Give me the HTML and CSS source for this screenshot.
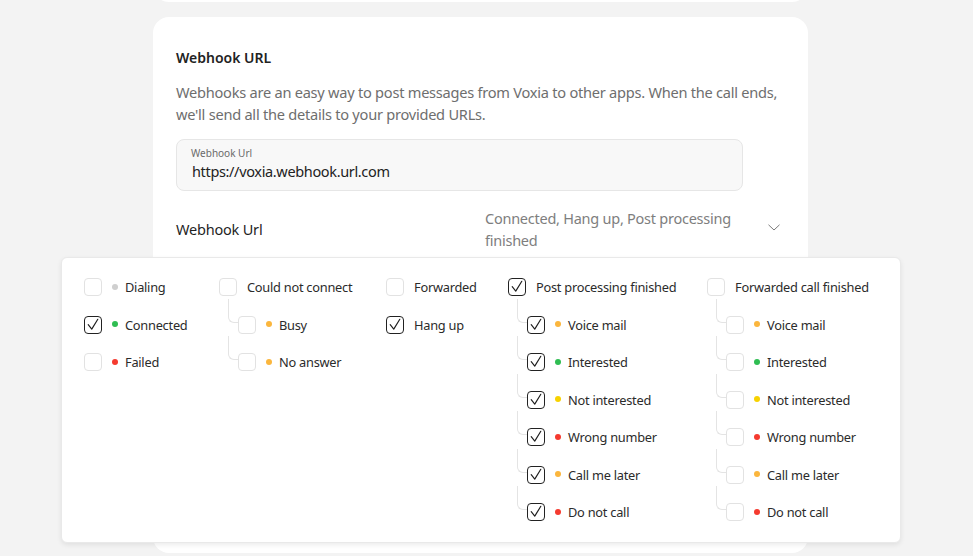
FILE: index.html
```html
<!DOCTYPE html>
<html>
<head>
<meta charset="utf-8">
<link rel="stylesheet" href="styles.css">
</head>
<body>
<div class="page">
  <div class="card card-top"></div>
  <div class="card card-main">
    <h2 class="title">Webhook URL</h2>
    <p class="desc">Webhooks are an easy way to post messages from Voxia to other apps. When the call ends,<br>we'll send all the details to your provided URLs.</p>
    <div class="input">
      <span class="input-label">Webhook Url</span>
      <span class="input-value">https://voxia.webhook.url.com</span>
    </div>
    <div class="select-row">
      <span class="select-label">Webhook Url</span>
      <span class="select-value">Connected, Hang up, Post processing finished</span>
      <svg class="chevron" width="12" height="7" viewBox="0 0 12 7"><path d="M0.5 0.8 L6 6 L11.5 0.8" fill="none" stroke="#7a7a7a" stroke-width="1"/></svg>
    </div>

    <div class="popover">
      <div class="col">
        <div class="item"><span class="cb"></span><span class="dot gray"></span><span class="lbl">Dialing</span></div>
        <div class="item"><span class="cb on"><svg viewBox="0 0 18 18"><path d="M3.6 8.6 L7.6 13.6 L14.4 2.6"/></svg></span><span class="dot green"></span><span class="lbl">Connected</span></div>
        <div class="item"><span class="cb"></span><span class="dot red"></span><span class="lbl">Failed</span></div>
      </div>
      <div class="col">
        <div class="item"><span class="cb"></span><span class="lbl plain">Could not connect</span></div>
        <div class="item child"><span class="cb"></span><span class="dot orange"></span><span class="lbl">Busy</span></div>
        <div class="item child"><span class="cb"></span><span class="dot orange"></span><span class="lbl">No answer</span></div>
      </div>
      <div class="col">
        <div class="item"><span class="cb"></span><span class="lbl plain">Forwarded</span></div>
        <div class="item"><span class="cb on"><svg viewBox="0 0 18 18"><path d="M3.6 8.6 L7.6 13.6 L14.4 2.6"/></svg></span><span class="lbl plain">Hang up</span></div>
      </div>
      <div class="col">
        <div class="item"><span class="cb on"><svg viewBox="0 0 18 18"><path d="M3.6 8.6 L7.6 13.6 L14.4 2.6"/></svg></span><span class="lbl plain">Post processing finished</span></div>
        <div class="item child"><span class="cb on"><svg viewBox="0 0 18 18"><path d="M3.6 8.6 L7.6 13.6 L14.4 2.6"/></svg></span><span class="dot orange"></span><span class="lbl">Voice mail</span></div>
        <div class="item child"><span class="cb on"><svg viewBox="0 0 18 18"><path d="M3.6 8.6 L7.6 13.6 L14.4 2.6"/></svg></span><span class="dot green"></span><span class="lbl">Interested</span></div>
        <div class="item child"><span class="cb on"><svg viewBox="0 0 18 18"><path d="M3.6 8.6 L7.6 13.6 L14.4 2.6"/></svg></span><span class="dot yellow"></span><span class="lbl">Not interested</span></div>
        <div class="item child"><span class="cb on"><svg viewBox="0 0 18 18"><path d="M3.6 8.6 L7.6 13.6 L14.4 2.6"/></svg></span><span class="dot red"></span><span class="lbl">Wrong number</span></div>
        <div class="item child"><span class="cb on"><svg viewBox="0 0 18 18"><path d="M3.6 8.6 L7.6 13.6 L14.4 2.6"/></svg></span><span class="dot orange"></span><span class="lbl">Call me later</span></div>
        <div class="item child"><span class="cb on"><svg viewBox="0 0 18 18"><path d="M3.6 8.6 L7.6 13.6 L14.4 2.6"/></svg></span><span class="dot red"></span><span class="lbl">Do not call</span></div>
      </div>
      <div class="col">
        <div class="item"><span class="cb"></span><span class="lbl plain">Forwarded call finished</span></div>
        <div class="item child"><span class="cb"></span><span class="dot orange"></span><span class="lbl">Voice mail</span></div>
        <div class="item child"><span class="cb"></span><span class="dot green"></span><span class="lbl">Interested</span></div>
        <div class="item child"><span class="cb"></span><span class="dot yellow"></span><span class="lbl">Not interested</span></div>
        <div class="item child"><span class="cb"></span><span class="dot red"></span><span class="lbl">Wrong number</span></div>
        <div class="item child"><span class="cb"></span><span class="dot orange"></span><span class="lbl">Call me later</span></div>
        <div class="item child"><span class="cb"></span><span class="dot red"></span><span class="lbl">Do not call</span></div>
      </div>
    </div>
  </div>
</div>
</body>
</html>
```

FILE: styles.css
```css
* { box-sizing: border-box; }
html, body { margin: 0; padding: 0; }
body {
  background: #f3f3f3;
  font-family: "Noto Sans", "Open Sans", sans-serif;
  color: #222;
  height: 556px;
  overflow: hidden;
}
.page {
  width: 655px;
  margin-left: 153px;
  display: flex;
  flex-direction: column;
  gap: 15px;
}
.card {
  background: #fff;
  border-radius: 16px;
}
.card-top {
  height: 40px;
  margin-top: -38px;
}
.card-main {
  position: relative;
  height: 536px;
  padding: 31px 23px 0 23px;
}
.title {
  margin: 0;
  font-size: 14px;
  font-weight: 600;
  line-height: 20px;
  color: #222;
}
.desc {
  margin: 13px 0 0 0;
  font-size: 14.6px;
  line-height: 22px;
  color: #6e6e6e;
  white-space: nowrap;
  letter-spacing: -0.25px;
}
.input {
  margin-top: 14px;
  width: 567px;
  height: 52px;
  background: #f8f8f8;
  border: 1px solid #e6e6e6;
  border-radius: 8px;
  padding: 7px 14px 0 14px;
  display: flex;
  flex-direction: column;
}
.input-label {
  font-size: 10px;
  line-height: 12px;
  color: #6a6a6a;
}
.input-value {
  margin-top: 2px;
  padding-left: 1px;
  font-size: 14.5px;
  line-height: 20px;
  color: #222;
  letter-spacing: -0.35px;
}
.select-row {
  display: flex;
  align-items: center;
  margin-top: 16px;
}
.select-label {
  width: 309px;
  font-size: 14.5px;
  color: #1f1f1f;
  letter-spacing: -0.2px;
}
.select-value {
  width: 260px;
  font-size: 14.5px;
  line-height: 22px;
  color: #7e7e7e;
  letter-spacing: -0.25px;
}
.chevron {
  margin-left: 23px;
  margin-top: -3px;
}
.popover {
  position: absolute;
  left: -92px;
  top: 240px;
  width: 840px;
  height: 286px;
  background: #fff;
  border: 1px solid #e9e9e9;
  border-radius: 6px;
  box-shadow: 0 2px 5px rgba(0,0,0,0.08);
  padding: 20px 0 0 22px;
  display: grid;
  grid-template-columns: 103px 135px 90px 167px auto;
  column-gap: 32px;
  align-items: start;
}
.col {
  display: flex;
  flex-direction: column;
  gap: 19.5px;
}
.item {
  position: relative;
  height: 18px;
  display: flex;
  align-items: center;
  white-space: nowrap;
}
.item.child { margin-left: 19px; }
.item.child::before {
  content: "";
  position: absolute;
  left: -10px;
  top: -17px;
  width: 9px;
  height: 23px;
  border-left: 1px solid #e4e4e4;
  border-bottom: 1px solid #e4e4e4;
  border-bottom-left-radius: 6px;
}
.cb {
  flex: none;
  width: 18px;
  height: 18px;
  border: 1px solid #e2e2e2;
  border-radius: 4px;
  background: #fff;
  display: flex;
}
.cb.on { border: 1.3px solid #222; }
.cb svg { width: 100%; height: 100%; }
.cb svg path { fill: none; stroke: #1e1e1e; stroke-width: 1.3; stroke-linejoin: round; stroke-linecap: round; }
.dot {
  flex: none;
  width: 6px;
  height: 6px;
  border-radius: 50%;
  margin-left: 10px;
  margin-top: -1px;
}
.gray { background: #cfcfcf; }
.green { background: #2fbd52; }
.red { background: #f53a2f; }
.orange { background: #fbb63d; }
.yellow { background: #f7d200; }
.lbl {
  margin-left: 7px;
  font-size: 12.8px;
  color: #2b2b2b;
  letter-spacing: -0.25px;
}
.lbl.plain { margin-left: 10px; }
```
